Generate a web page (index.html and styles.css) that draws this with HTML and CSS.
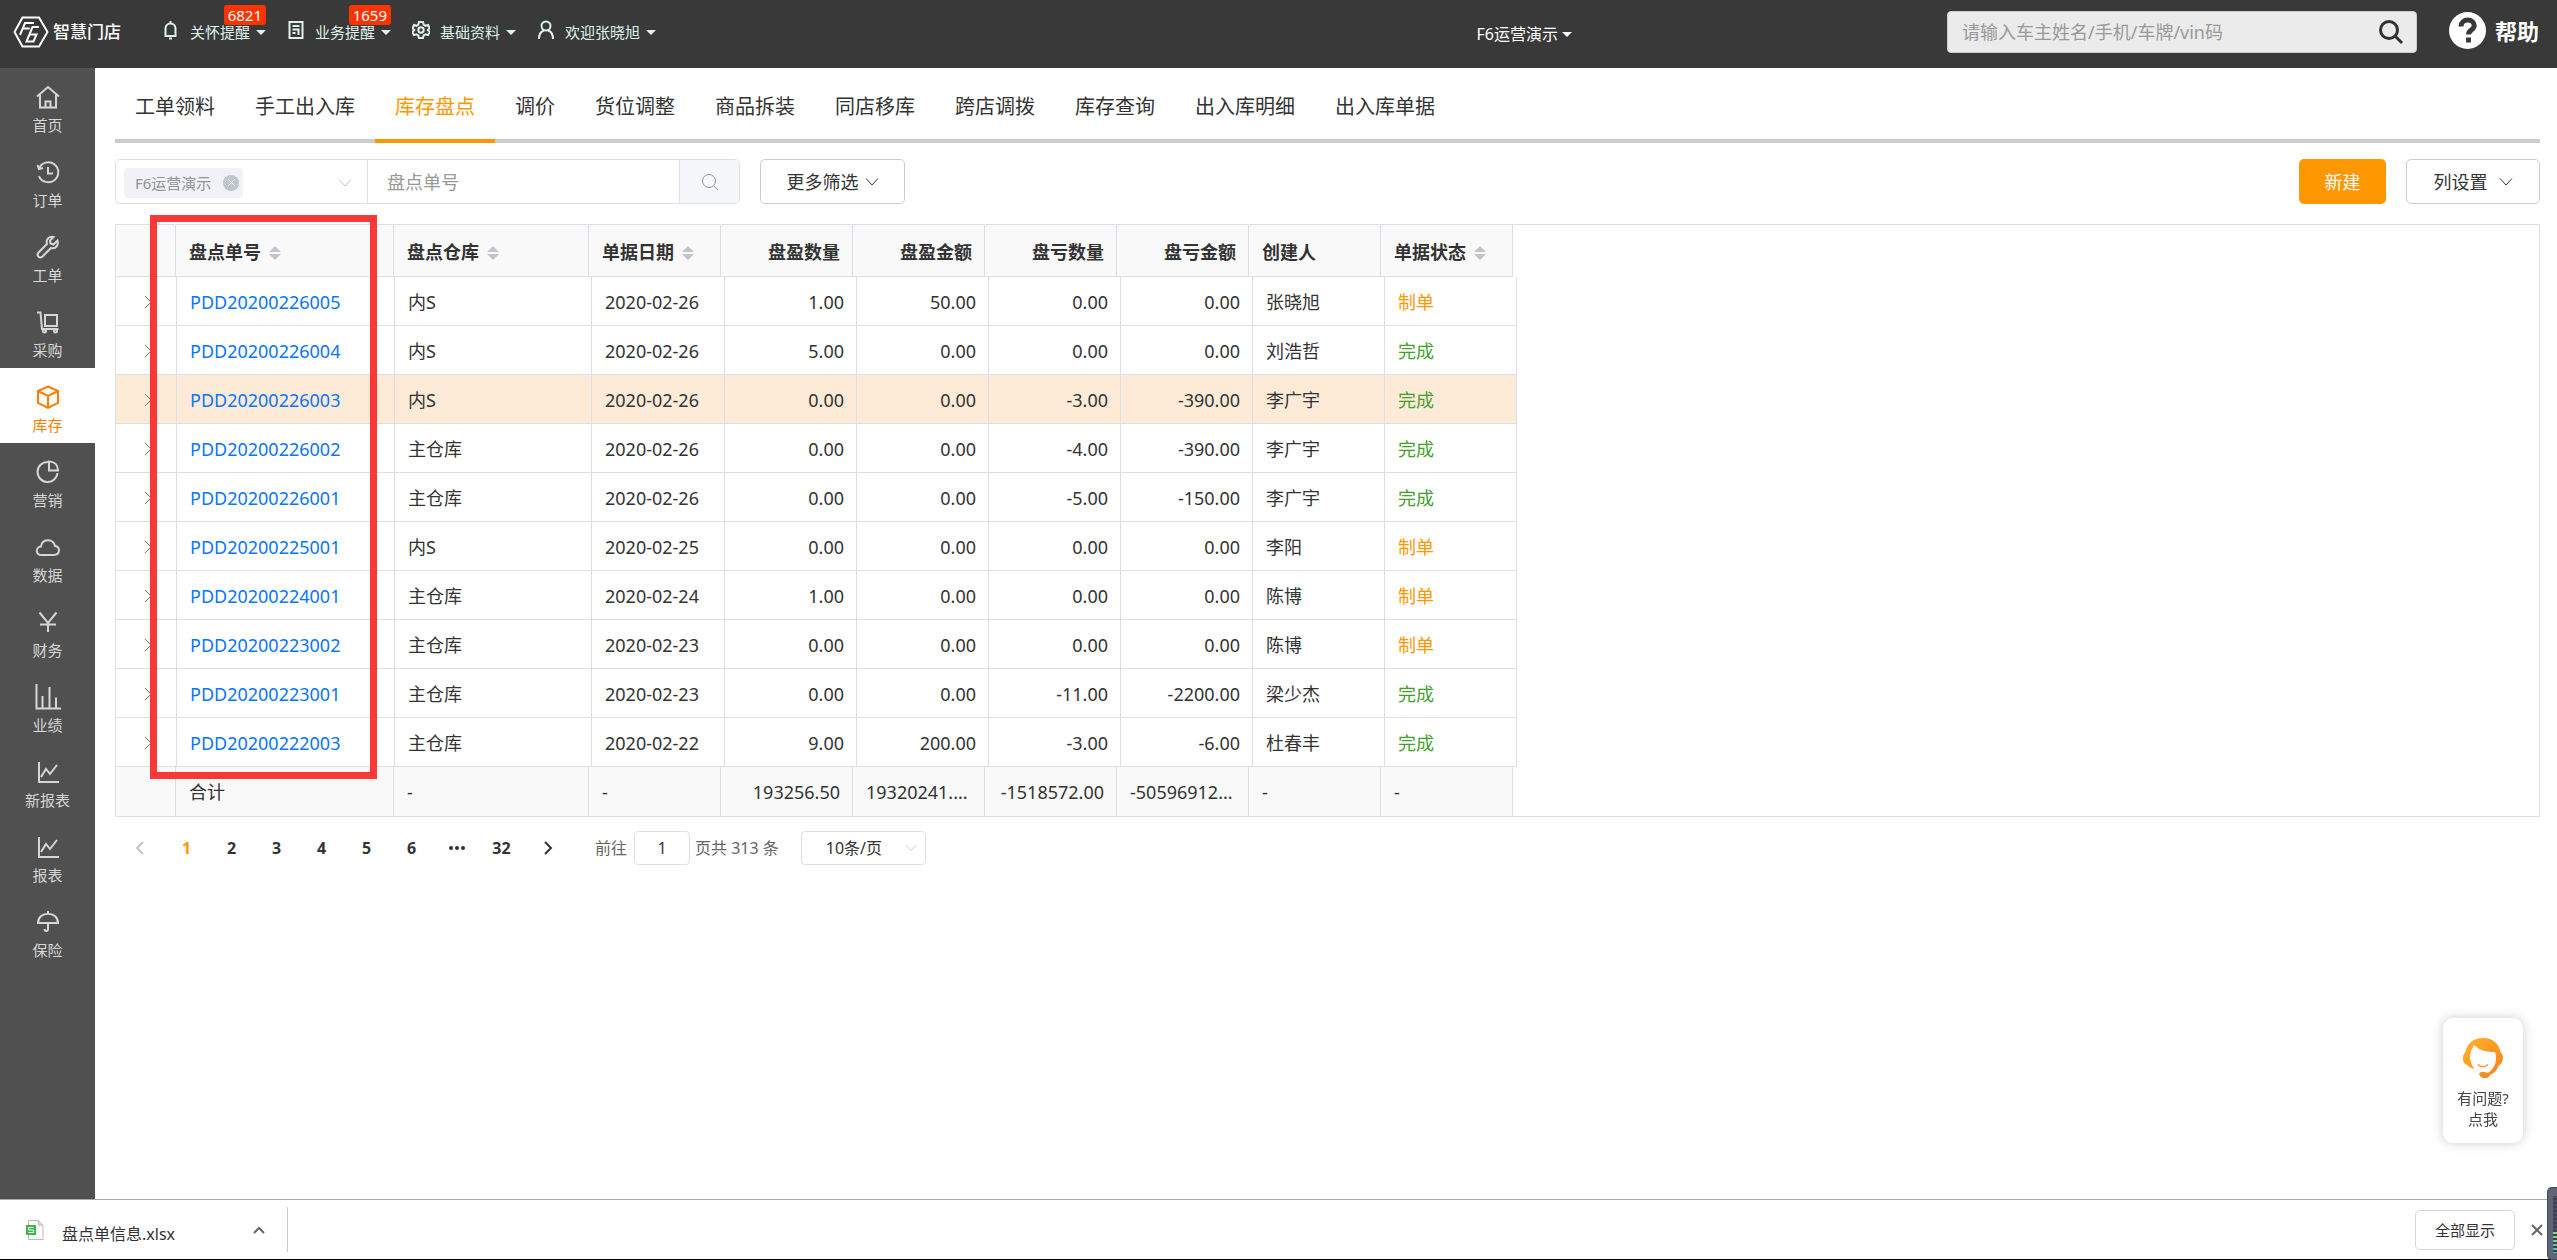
FILE: index.html
```html
<!DOCTYPE html>
<html lang="zh-CN">
<head>
<meta charset="utf-8">
<meta name="viewport" content="width=device-width, initial-scale=1">
<title>库存盘点</title>
<link rel="stylesheet" href="styles.css">
</head>
<body>
<svg class="defs" aria-hidden="true">
  <symbol id="down" viewBox="0 0 14 14"><path d="M1 3.5 7 10l6-6.5"/></symbol>
  <symbol id="right" viewBox="0 0 10 14"><path d="M2 1l6 6-6 6"/></symbol>
  <symbol id="left" viewBox="0 0 10 14"><path d="M8 1 2 7l6 6"/></symbol>
  <symbol id="sort" viewBox="0 0 12 14"><path d="M6 0l6 6H0zM6 14l6-6H0z"/></symbol>
  <symbol id="chart" viewBox="0 0 26 26"><path d="M4 3v20h20M6 18l5-8 4 5 7-9"/></symbol>
</svg>

<header class="topbar">
  <a class="logo" href="#">
    <svg width="36" height="32" viewBox="0 0 36 32"><path d="M9.500 1.500h16.500L34.500 16 26 30.500H9.500L1.500 16z"/><path d="M7 19l5-12h9M9.700 12.500h7"/><path d="M26 11h-6.500L13.500 25.500h7l3-7h-6.500"/></svg>
    <span>智慧门店</span>
  </a>
  <nav class="topnav">
    <button class="top-item" type="button">
      <svg class="top-icon" viewBox="0 0 18 20"><path d="M3.500 16V8.500a5 5 0 0 1 10 0V16M2.500 16h12M8.500 1v2.500M7 18.500h3"/></svg>
      <span>关怀提醒</span><i class="caret"></i><b class="badge">6821</b>
    </button>
    <button class="top-item" type="button">
      <svg class="top-icon" viewBox="0 0 18 20"><path d="M2.500 2h13v16h-13zM5.500 6h7M5.500 9.500h7M5.500 13h3M11.500 10v5"/></svg>
      <span>业务提醒</span><i class="caret"></i><b class="badge">1659</b>
    </button>
    <button class="top-item" type="button">
      <svg class="top-icon" viewBox="0 0 18 20"><path d="M7 2h4l.7 2.700 2 1.100 2.500-.8 1.500 3.200L15.800 10l1.900 1.900-1.700 3.200-2.500-.8-1.900 1.100L11 18H7l-.7-2.600-1.900-1.100-2.500.8L.5 11.800 2.300 10 .5 8.200 2 5l2.500.8 1.800-1.100z"/><circle cx="9" cy="10" r="2.700"/></svg>
      <span>基础资料</span><i class="caret"></i>
    </button>
    <button class="top-item" type="button">
      <svg class="top-icon" viewBox="0 0 18 20"><circle cx="9" cy="6" r="4.500"/><path d="M2 19c0-5.500 2-7.500 4.800-8.500M16 19c0-5.500-2-7.500-4.800-8.500"/></svg>
      <span>欢迎张晓旭</span><i class="caret"></i>
    </button>
  </nav>
  <button class="store" type="button">F6运营演示<i class="caret"></i></button>
  <form class="search">
    <input type="search" aria-label="搜索" placeholder="请输入车主姓名/手机/车牌/vin码">
    <button type="button" aria-label="搜索"><svg width="26" height="26" viewBox="0 0 26 26"><circle cx="11" cy="11" r="8.500"/><path d="M17.500 17.500 24 24"/></svg></button>
  </form>
  <a class="help" href="#">
    <svg width="37" height="37" viewBox="0 0 37 37"><circle cx="18.500" cy="18.500" r="18.500"/><path d="M12 14.500c0-4 3-6.500 6.700-6.500 3.800 0 6.500 2.300 6.500 5.500 0 4.500-5.700 4.500-5.700 9M19.500 25.500v5"/></svg>
    <span>帮助</span>
  </a>
</header>

<div class="shell">
  <nav class="sidebar">
    <a href="#"><svg viewBox="0 0 26 26"><path d="M2 12.500 13 3l11 9.500M5 11v12.500h16V11M10.500 23v-5.500h5V23"/></svg>首页</a>
    <a href="#"><svg viewBox="0 0 26 26"><path d="M4 9.500A10 10 0 1 1 4 17M2.500 6l1.500 4 4-1M13 8v6.500h5"/></svg>订单</a>
    <a href="#"><svg viewBox="0 0 26 26"><path d="M22.500 6.500 18.500 10.500l-3-1-.5-3L18.500 3c-4.500-1-8 2.500-6.500 7l-8.500 8.500c-2.500 3 1 6.500 4 4L16 14c4.500 1.500 8-3 6.500-7.500z"/></svg>工单</a>
    <a href="#"><svg viewBox="0 0 26 26"><path d="M2 3.500h3.500L7 20h16.500M10 6h12v11H10z"/><circle cx="9.500" cy="22" r="1.500"/><circle cx="20.500" cy="22" r="1.500"/></svg>采购</a>
    <a class="current" href="#"><svg viewBox="0 0 26 26"><path d="M13 2.500l10 4.500v12L13 24 3 19V7zM3 7l10 5 10-5M13 12v12"/></svg>库存</a>
    <a href="#"><svg viewBox="0 0 26 26"><path d="M13 3a10 10 0 1 0 9.500 11"/><path d="M14 2.500c5.500 0 9 3.500 9 9h-9z"/></svg>营销</a>
    <a href="#"><svg viewBox="0 0 26 26"><path d="M7 21c-7 0-6.500-8-1-8.500 1-8 12-8.500 14-.5 6 .5 5 9-1 9z"/></svg>数据</a>
    <a href="#"><svg viewBox="0 0 26 26"><path d="M4.500 3.500 13 14l8.500-10.500M5 15.500h16M13 14v9"/></svg>财务</a>
    <a href="#"><svg viewBox="0 0 26 26"><path d="M1.500 0v24.500H26M7.500 24V12M14.500 24V3M21 24V13.500"/></svg>业绩</a>
    <a href="#"><svg><use href="#chart"/></svg>新报表</a>
    <a href="#"><svg><use href="#chart"/></svg>报表</a>
    <a href="#"><svg viewBox="0 0 26 26"><path d="M3 14C3 1.500 23 1.500 23 14zM13 2v2.500M13 14v6c0 2.500-3.500 2.500-3.500 0"/></svg>保险</a>
  </nav>

  <main class="content">
    <nav class="tabs">
      <a href="#">工单领料</a><a href="#">手工出入库</a><a class="active" href="#">库存盘点</a><a href="#">调价</a><a href="#">货位调整</a><a href="#">商品拆装</a><a href="#">同店移库</a><a href="#">跨店调拨</a><a href="#">库存查询</a><a href="#">出入库明细</a><a href="#">出入库单据</a>
    </nav>

    <div class="filters">
      <div class="combo">
        <div class="store-pick">
          <span class="tag">F6运营演示<button type="button" aria-label="移除"><svg width="9" height="9" viewBox="0 0 9 9"><path d="M1 1l7 7M8 1 1 8"/></svg></button></span>
          <button class="open" type="button" aria-label="选择门店"><svg class="chev"><use href="#down"/></svg></button>
        </div>
        <input type="text" aria-label="盘点单号" placeholder="盘点单号">
        <button class="find" type="button" aria-label="查询"><svg width="18" height="18" viewBox="0 0 18 18"><circle cx="8" cy="8" r="6.500"/><path d="M13 13l4 4"/></svg></button>
      </div>
      <button class="btn more" type="button">更多筛选<svg class="chev"><use href="#down"/></svg></button>
      <button class="btn primary" type="button">新建</button>
      <button class="btn columns" type="button">列设置<svg class="chev"><use href="#down"/></svg></button>
    </div>

    <div class="grid">
      <table class="edge head">
        <colgroup><col class="c-exp"><col class="c-no"><col class="c-wh"><col class="c-date"><col span="6"></colgroup>
        <thead><tr><th></th><th>盘点单号<svg class="sort"><use href="#sort"/></svg></th><th>盘点仓库<svg class="sort"><use href="#sort"/></svg></th><th>单据日期<svg class="sort"><use href="#sort"/></svg></th><th class="num">盘盈数量</th><th class="num">盘盈金额</th><th class="num">盘亏数量</th><th class="num">盘亏金额</th><th>创建人</th><th>单据状态<svg class="sort"><use href="#sort"/></svg></th></tr></thead>
      </table>
      <table class="rows">
        <colgroup><col class="c-exp"><col class="c-no"><col class="c-wh"><col class="c-date"><col span="6"></colgroup>
        <tbody>
          <tr><td><button class="expand" type="button" aria-label="展开"><svg><use href="#right"/></svg></button></td><td><a href="#">PDD20200226005</a></td><td>内S</td><td>2020-02-26</td><td class="num">1.00</td><td class="num">50.00</td><td class="num">0.00</td><td class="num">0.00</td><td>张晓旭</td><td class="draft">制单</td></tr>
          <tr><td><button class="expand" type="button" aria-label="展开"><svg><use href="#right"/></svg></button></td><td><a href="#">PDD20200226004</a></td><td>内S</td><td>2020-02-26</td><td class="num">5.00</td><td class="num">0.00</td><td class="num">0.00</td><td class="num">0.00</td><td>刘浩哲</td><td class="done">完成</td></tr>
          <tr class="hover"><td><button class="expand" type="button" aria-label="展开"><svg><use href="#right"/></svg></button></td><td><a href="#">PDD20200226003</a></td><td>内S</td><td>2020-02-26</td><td class="num">0.00</td><td class="num">0.00</td><td class="num">-3.00</td><td class="num">-390.00</td><td>李广宇</td><td class="done">完成</td></tr>
          <tr><td><button class="expand" type="button" aria-label="展开"><svg><use href="#right"/></svg></button></td><td><a href="#">PDD20200226002</a></td><td>主仓库</td><td>2020-02-26</td><td class="num">0.00</td><td class="num">0.00</td><td class="num">-4.00</td><td class="num">-390.00</td><td>李广宇</td><td class="done">完成</td></tr>
          <tr><td><button class="expand" type="button" aria-label="展开"><svg><use href="#right"/></svg></button></td><td><a href="#">PDD20200226001</a></td><td>主仓库</td><td>2020-02-26</td><td class="num">0.00</td><td class="num">0.00</td><td class="num">-5.00</td><td class="num">-150.00</td><td>李广宇</td><td class="done">完成</td></tr>
          <tr><td><button class="expand" type="button" aria-label="展开"><svg><use href="#right"/></svg></button></td><td><a href="#">PDD20200225001</a></td><td>内S</td><td>2020-02-25</td><td class="num">0.00</td><td class="num">0.00</td><td class="num">0.00</td><td class="num">0.00</td><td>李阳</td><td class="draft">制单</td></tr>
          <tr><td><button class="expand" type="button" aria-label="展开"><svg><use href="#right"/></svg></button></td><td><a href="#">PDD20200224001</a></td><td>主仓库</td><td>2020-02-24</td><td class="num">1.00</td><td class="num">0.00</td><td class="num">0.00</td><td class="num">0.00</td><td>陈博</td><td class="draft">制单</td></tr>
          <tr><td><button class="expand" type="button" aria-label="展开"><svg><use href="#right"/></svg></button></td><td><a href="#">PDD20200223002</a></td><td>主仓库</td><td>2020-02-23</td><td class="num">0.00</td><td class="num">0.00</td><td class="num">0.00</td><td class="num">0.00</td><td>陈博</td><td class="draft">制单</td></tr>
          <tr><td><button class="expand" type="button" aria-label="展开"><svg><use href="#right"/></svg></button></td><td><a href="#">PDD20200223001</a></td><td>主仓库</td><td>2020-02-23</td><td class="num">0.00</td><td class="num">0.00</td><td class="num">-11.00</td><td class="num">-2200.00</td><td>梁少杰</td><td class="done">完成</td></tr>
          <tr><td><button class="expand" type="button" aria-label="展开"><svg><use href="#right"/></svg></button></td><td><a href="#">PDD20200222003</a></td><td>主仓库</td><td>2020-02-22</td><td class="num">9.00</td><td class="num">200.00</td><td class="num">-3.00</td><td class="num">-6.00</td><td>杜春丰</td><td class="done">完成</td></tr>
        </tbody>
      </table>
      <table class="edge foot">
        <colgroup><col class="c-exp"><col class="c-no"><col class="c-wh"><col class="c-date"><col span="6"></colgroup>
        <tbody><tr><td></td><td>合计</td><td>-</td><td>-</td><td class="num">193256.50</td><td>19320241....</td><td class="num">-1518572.00</td><td>-50596912...</td><td>-</td><td>-</td></tr></tbody>
      </table>
      <div class="marker"></div>
    </div>

    <div class="pager">
      <button class="page prev" type="button" aria-label="上一页" disabled><svg><use href="#left"/></svg></button>
      <button class="page on" type="button">1</button><button class="page" type="button">2</button><button class="page" type="button">3</button><button class="page" type="button">4</button><button class="page" type="button">5</button><button class="page" type="button">6</button>
      <button class="page" type="button" aria-label="向后"><svg class="dots" viewBox="0 0 16 4"><circle cx="2" cy="2" r="2"/><circle cx="8" cy="2" r="2"/><circle cx="14" cy="2" r="2"/></svg></button>
      <button class="page" type="button">32</button>
      <button class="page next" type="button" aria-label="下一页"><svg><use href="#right"/></svg></button>
      <label class="jump">前往<input type="text" value="1"></label>
      <span class="total">页共 313 条</span>
      <div class="size"><select aria-label="每页条数"><option>10条/页</option></select><svg class="chev"><use href="#down"/></svg></div>
    </div>
  </main>
</div>

<button class="service" type="button">
  <svg width="40" height="40" viewBox="0 0 40 40"><defs><linearGradient id="hair" x1="0" y1="0" x2="1" y2="1"><stop offset="0" stop-color="#ffb62e"/><stop offset="1" stop-color="#ff7d1a"/></linearGradient></defs><path fill="url(#hair)" d="M20 0C10 0 4 6 2.500 14-1 17-1 24 2.500 26c3 2.500 6 4.500 9 5-5-6-5.500-13-3.500-18l3-6c6 6 13 7 21 7 2 6 1 12-2 16-2 3-4 4.500-6 5-5-3-11 0-6 4 4 2.500 8 1 9-2 4-1.500 7-5 8.500-9C41 24 41 17 37.500 14 36 6 30 0 20 0z"/><path fill="none" stroke="#ff8a1e" stroke-width="1.500" d="M15 26.500c3 3 7 3 10 0"/></svg>
  <span>有问题?</span><span>点我</span>
</button>

<footer class="downloads">
  <button class="file" type="button">
    <svg width="18" height="20" viewBox="0 0 18 20"><path d="M2.500.5h10l4.500 4.500v14.500h-14.500z" fill="#fff" stroke="#bbb"/><path d="M12.500.5V5H17" fill="#ddd" stroke="#bbb"/><path d="M0 5h10v10H0z" fill="#3db54a" stroke="none"/><path d="M7.500 7.500h-5V10h5v2.500h-5" fill="none" stroke="#fff"/></svg>
    <span>盘点单信息.xlsx</span>
    <svg class="up" width="12" height="8" viewBox="0 0 12 8"><path d="M1 7l5-5 5 5"/></svg>
  </button>
  <button class="show-all" type="button">全部显示</button>
  <button class="close" type="button" aria-label="关闭"><svg width="12" height="12" viewBox="0 0 12 12"><path d="M1 1l10 10M11 1 1 11"/></svg></button>
</footer>
<div class="meter"><i></i></div>
</body>
</html>
```

FILE: styles.css
```css
* { box-sizing: border-box; }
body {
  margin: 0;
  min-height: 100vh;
  display: flex;
  flex-direction: column;
  background: #fff;
  color: #333;
  font-family: "Noto Sans", "Noto Sans CJK SC", sans-serif;
  font-size: 18px;
  line-height: 24px;
}
button, input, select { font: inherit; color: inherit; margin: 0; padding: 0; border: 0; background: none; outline: 0; }
button { cursor: pointer; }
a { color: inherit; text-decoration: none; }
svg { fill: none; stroke: currentColor; flex: none; }
.defs { display: none; }
.chev { width: 14px; height: 14px; }
::placeholder { color: #999; opacity: 1; }

/* top bar */
.topbar {
  display: flex;
  align-items: center;
  height: 68px;
  padding: 0 18px 4px 13px;
  background: #393939;
  color: #fff;
  font-size: 15px;
}
.logo { display: flex; align-items: center; gap: 4px; width: 149px; font-size: 17px; font-weight: 500; }
.logo svg { stroke-width: 2; }
.topnav { display: flex; gap: 21px; color: #dff3ec; }
.top-item { position: relative; display: flex; align-items: center; white-space: nowrap; }
.top-icon { width: 18px; height: 20px; margin: 0 10px 4px 0; stroke-width: 2; }
.caret { margin-left: 6px; border: 5px solid transparent; border-top-color: currentColor; border-bottom-width: 0; }
.badge {
  position: absolute;
  top: -15px;
  right: 0;
  height: 20px;
  padding: 0 4px;
  border-radius: 3px;
  background: #ff3300;
  color: #fff;
  font-weight: 400;
  line-height: 20px;
}
.store { display: flex; align-items: center; margin-left: auto; margin-right: 375px; padding-top: 4px; font-size: 16px; white-space: nowrap; }
.store .caret { margin-left: 4px; }
.search {
  display: flex;
  align-items: center;
  width: 470px;
  height: 42px;
  margin-right: 32px;
  padding: 0 12px 0 14px;
  border: 1px solid #ccc;
  border-radius: 4px;
  background: #ebebeb;
  font-size: 18px;
}
.search input { flex: 1; min-width: 0; appearance: none; }
.search button { display: flex; color: #333; }
.search svg { stroke-width: 3; }
.help { display: flex; align-items: center; gap: 9px; padding-bottom: 3px; font-size: 22px; font-weight: 700; white-space: nowrap; }
.help circle { fill: #fff; stroke: none; }
.help path { stroke: #393939; stroke-width: 5; }

/* side navigation */
.shell { flex: 1; display: flex; }
.sidebar { flex: none; width: 95px; background: #505050; color: #d6d6d6; font-size: 15px; line-height: 20px; }
.sidebar a { display: flex; flex-direction: column; align-items: center; gap: 5px; height: 75px; padding-top: 16px; }
.sidebar svg { width: 26px; height: 26px; stroke-width: 2; }
.sidebar .current { background: #fff; color: #ff7e00; }

.content { flex: 1; min-width: 0; padding: 0 17px 0 20px; }
.tabs { display: flex; height: 75px; border-bottom: 4px solid #ccc; font-size: 20px; }
.tabs a { height: 75px; padding: 0 20px; border-bottom: 4px solid transparent; line-height: 78px; white-space: nowrap; }
.tabs .active { color: #ff9800; border-bottom-color: #ff9800; }

/* filter row */
.filters { display: flex; align-items: center; margin: 16px 0 20px; }
.combo { display: flex; width: 625px; height: 45px; border: 1px solid #dcdfe6; border-radius: 5px; overflow: hidden; }
.store-pick { display: flex; align-items: center; width: 252px; padding: 2px 15px 0 8px; border-right: 1px solid #dcdfe6; color: #c0c4cc; }
.tag { display: flex; align-items: center; gap: 12px; height: 30px; padding: 0 4px 0 11px; border-radius: 4px; background: #f0f2f5; color: #909399; font-size: 15px; white-space: nowrap; }
.tag button { display: flex; align-items: center; justify-content: center; width: 16px; height: 16px; border-radius: 50%; background: #c0c4cc; color: #fff; }
.open { display: flex; margin-left: auto; }
.combo input { flex: 1; min-width: 0; padding: 0 19px; }
.find { display: flex; align-items: center; justify-content: center; width: 60px; border-left: 1px solid #dcdfe6; background: #f5f7fa; color: #909399; }
.btn { display: flex; align-items: center; justify-content: center; height: 45px; border: 1px solid #ccc; border-radius: 5px; white-space: nowrap; }
.more { width: 145px; margin-left: 20px; gap: 6px; }
.primary { width: 87px; margin-left: auto; border: 0; background: #ff9800; color: #fff; }
.columns { width: 134px; margin-left: 20px; gap: 11px; }

/* stock-take table */
.grid { position: relative; border: 1px solid #dcdfe6; }
.grid table { table-layout: fixed; border-collapse: separate; border-spacing: 0; }
.edge { width: 1397px; background: #f9f9f9; }
.rows { width: 1401px; }
.c-exp { width: 60px; }
.c-no { width: 218px; }
.c-wh { width: 195px; }
.c-date { width: 132px; }
.rows .c-exp { width: 61px; }
.rows .c-wh { width: 197px; }
.rows .c-date { width: 133px; }
.grid th, .grid td { padding: 1px 12px 0 13px; border-right: 1px solid #dcdfe6; border-bottom: 1px solid #dcdfe6; text-align: left; white-space: nowrap; }
.grid td { height: 49px; }
.grid th { height: 52px; padding-top: 3px; font-weight: 700; }
.foot td { border-bottom: 0; }
.grid .num { text-align: right; }
.rows a { color: #0a75ff; }
.hover td { background: #fdebd8; }
.grid .draft { color: #ff9800; }
.grid .done { color: #43a02c; }
.sort { width: 12px; height: 14px; margin: 0 0 3px 8px; vertical-align: middle; fill: #c0c4cc; stroke: none; }
.expand { display: flex; margin-left: 14px; color: #777; }
.expand svg { width: 10px; height: 14px; }
.marker { position: absolute; left: 34px; top: -10px; width: 227px; height: 564px; border: 7px solid #fb3838; pointer-events: none; }

/* pagination */
.pager { display: flex; align-items: center; margin-top: 14px; height: 34px; font-size: 16px; }
.page { display: flex; align-items: center; justify-content: center; width: 45px; font-weight: 700; }
.page svg { width: 10px; height: 14px; stroke-width: 2; }
.page .dots { width: 16px; height: 4px; fill: currentColor; stroke: none; }
.on { color: #ff9800; }
.prev { width: 49px; color: #c0c4cc; }
.next { width: 47px; }
.jump { display: flex; align-items: center; gap: 7px; margin-left: 24px; color: #666; }
.jump input { width: 56px; height: 34px; border: 1px solid #dcdfe6; border-radius: 4px; color: #333; text-align: center; }
.total { margin-left: 5px; color: #666; white-space: nowrap; }
.size { position: relative; margin-left: 22px; color: #333; }
.size select { width: 125px; height: 34px; padding-left: 24px; border: 1px solid #dcdfe6; border-radius: 4px; appearance: none; }
.size .chev { position: absolute; right: 9px; top: 11px; width: 12px; height: 12px; color: #c0c4cc; pointer-events: none; }

/* floating customer-service card */
.service {
  position: fixed;
  right: 34px;
  bottom: 117px;
  display: flex;
  flex-direction: column;
  align-items: center;
  width: 80px;
  height: 125px;
  padding-top: 20px;
  border-radius: 10px;
  background: #fff;
  box-shadow: 0 0 12px rgba(0, 0, 0, .2);
  color: #444;
  font-size: 15px;
  line-height: 21px;
}
.service svg { margin-bottom: 10px; stroke: none; }

/* download shelf */
.downloads { display: flex; align-items: center; height: 61px; padding-right: 14px; border-top: 1px solid #aaa; border-bottom: 1px solid #000; font-size: 16px; }
.file { display: flex; align-items: center; width: 288px; height: 45px; padding: 0 22px 0 26px; border-right: 1px solid #ccc; white-space: nowrap; }
.file span { margin: 8px 0 0 18px; }
.up { margin-left: auto; color: #666; stroke-width: 2; }
.show-all { width: 100px; height: 40px; margin-left: auto; border: 1px solid #d5d7da; border-radius: 5px; font-size: 15px; }
.close { display: flex; margin-left: 16px; color: #666; }
.close svg { stroke-width: 2; }
.meter { position: fixed; right: 0; bottom: 0; width: 10px; height: 73px; padding: 8px 0 6px 5px; border-radius: 5px 0 0 5px; border: 1px solid #44485a; border-right: 0; background: #5f6478; }
.meter i { display: block; height: 100%; background: repeating-linear-gradient(transparent 0 2px, #3b3f4e 2px 4px), linear-gradient(#4b4f60 60%, #9fd08a 60%, #45c9b0); }
```
